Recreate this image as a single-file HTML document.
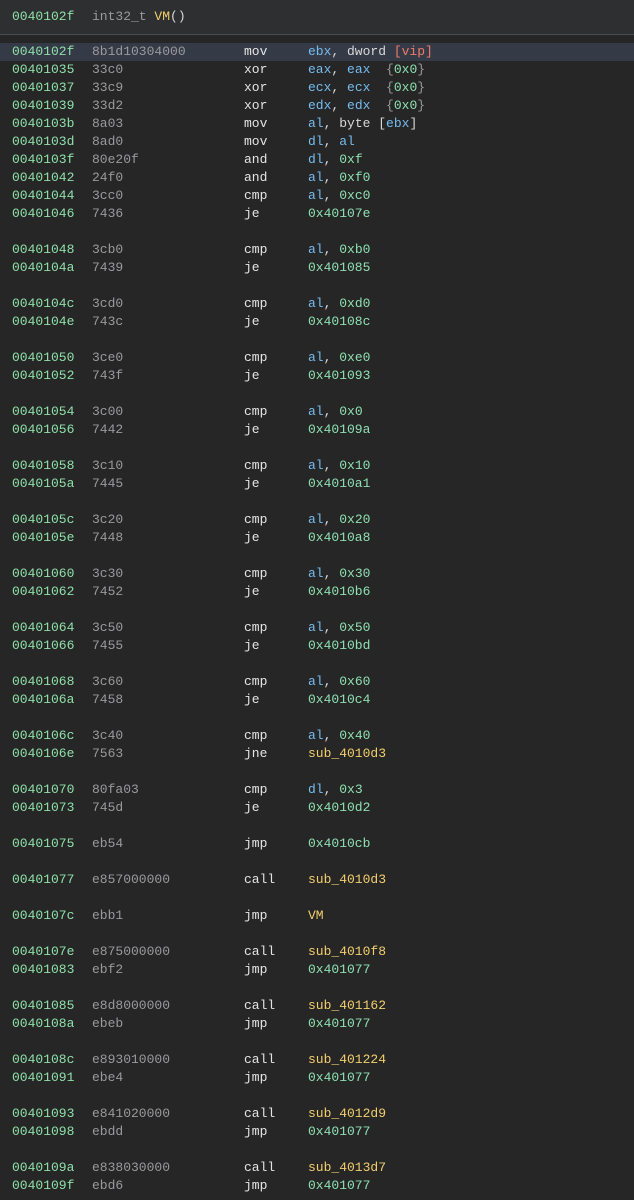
<!DOCTYPE html><html><head><meta charset="utf-8"><style>
body{margin:0;width:634px;height:1200px;background:#262627;overflow:hidden;font-family:"Liberation Mono",monospace;font-size:13px;}
#hd{position:absolute;left:0;top:0;width:634px;height:34px;background:#2e2f31;border-bottom:1px solid #4a4b4d;}
#hd span{position:absolute;top:9px;}
.r{position:absolute;left:0;width:634px;height:18px;line-height:18px;white-space:pre;}
.r span{position:absolute;top:0}
.a{left:12px;color:#8ee0a8}.b{left:92px;color:#9a9a9d}.m{left:244px;color:#e4e4e4}.o{left:308px;color:#d8d8d8}
.g{color:#8ee0b0}.k{color:#76bdf0}.y{color:#f2cf6c}.rd{color:#f07a6a}.gr{color:#9a9a9d}
.hl{background:#353a47}
</style></head><body>
<div id="hd"><span class="a" style="left:12px">0040102f</span><span style="left:92px;color:#9a9a9d">int32_t <span style="position:static;color:#f2cf6c">VM</span><span style="position:static;color:#d8d8d8">()</span></span></div>
<div id="rows"></div>
<script>
var L=[
["0040102f","8b1d10304000","mov",'<i class=k>ebx</i>, dword <i class=rd>[vip]</i>'],
["00401035","33c0","xor",'<i class=k>eax</i>, <i class=k>eax</i>  <i class=gr>{</i><i class=g>0x0</i><i class=gr>}</i>'],
["00401037","33c9","xor",'<i class=k>ecx</i>, <i class=k>ecx</i>  <i class=gr>{</i><i class=g>0x0</i><i class=gr>}</i>'],
["00401039","33d2","xor",'<i class=k>edx</i>, <i class=k>edx</i>  <i class=gr>{</i><i class=g>0x0</i><i class=gr>}</i>'],
["0040103b","8a03","mov",'<i class=k>al</i>, byte [<i class=k>ebx</i>]'],
["0040103d","8ad0","mov",'<i class=k>dl</i>, <i class=k>al</i>'],
["0040103f","80e20f","and",'<i class=k>dl</i>, <i class=g>0xf</i>'],
["00401042","24f0","and",'<i class=k>al</i>, <i class=g>0xf0</i>'],
["00401044","3cc0","cmp",'<i class=k>al</i>, <i class=g>0xc0</i>'],
["00401046","7436","je",'<i class=g>0x40107e</i>'],null,
["00401048","3cb0","cmp",'<i class=k>al</i>, <i class=g>0xb0</i>'],
["0040104a","7439","je",'<i class=g>0x401085</i>'],null,
["0040104c","3cd0","cmp",'<i class=k>al</i>, <i class=g>0xd0</i>'],
["0040104e","743c","je",'<i class=g>0x40108c</i>'],null,
["00401050","3ce0","cmp",'<i class=k>al</i>, <i class=g>0xe0</i>'],
["00401052","743f","je",'<i class=g>0x401093</i>'],null,
["00401054","3c00","cmp",'<i class=k>al</i>, <i class=g>0x0</i>'],
["00401056","7442","je",'<i class=g>0x40109a</i>'],null,
["00401058","3c10","cmp",'<i class=k>al</i>, <i class=g>0x10</i>'],
["0040105a","7445","je",'<i class=g>0x4010a1</i>'],null,
["0040105c","3c20","cmp",'<i class=k>al</i>, <i class=g>0x20</i>'],
["0040105e","7448","je",'<i class=g>0x4010a8</i>'],null,
["00401060","3c30","cmp",'<i class=k>al</i>, <i class=g>0x30</i>'],
["00401062","7452","je",'<i class=g>0x4010b6</i>'],null,
["00401064","3c50","cmp",'<i class=k>al</i>, <i class=g>0x50</i>'],
["00401066","7455","je",'<i class=g>0x4010bd</i>'],null,
["00401068","3c60","cmp",'<i class=k>al</i>, <i class=g>0x60</i>'],
["0040106a","7458","je",'<i class=g>0x4010c4</i>'],null,
["0040106c","3c40","cmp",'<i class=k>al</i>, <i class=g>0x40</i>'],
["0040106e","7563","jne",'<i class=y>sub_4010d3</i>'],null,
["00401070","80fa03","cmp",'<i class=k>dl</i>, <i class=g>0x3</i>'],
["00401073","745d","je",'<i class=g>0x4010d2</i>'],null,
["00401075","eb54","jmp",'<i class=g>0x4010cb</i>'],null,
["00401077","e857000000","call",'<i class=y>sub_4010d3</i>'],null,
["0040107c","ebb1","jmp",'<i class=y>VM</i>'],null,
["0040107e","e875000000","call",'<i class=y>sub_4010f8</i>'],
["00401083","ebf2","jmp",'<i class=g>0x401077</i>'],null,
["00401085","e8d8000000","call",'<i class=y>sub_401162</i>'],
["0040108a","ebeb","jmp",'<i class=g>0x401077</i>'],null,
["0040108c","e893010000","call",'<i class=y>sub_401224</i>'],
["00401091","ebe4","jmp",'<i class=g>0x401077</i>'],null,
["00401093","e841020000","call",'<i class=y>sub_4012d9</i>'],
["00401098","ebdd","jmp",'<i class=g>0x401077</i>'],null,
["0040109a","e838030000","call",'<i class=y>sub_4013d7</i>'],
["0040109f","ebd6","jmp",'<i class=g>0x401077</i>']];
var h='';L.forEach(function(r,i){if(!r)return;
h+='<div class="r'+(i==0?' hl':'')+'" style="top:'+(43+i*18)+'px"><span class=a>'+r[0]+'</span><span class=b>'+r[1]+'</span><span class=m>'+r[2]+'</span><span class=o>'+r[3].replace(/<i /g,'<b style="font-weight:normal" ').replace(/<\/i>/g,'</b>')+'</span></div>';});
document.getElementById('rows').innerHTML=h;
</script>
<style>.o b{font-style:normal}</style>
</body></html>
